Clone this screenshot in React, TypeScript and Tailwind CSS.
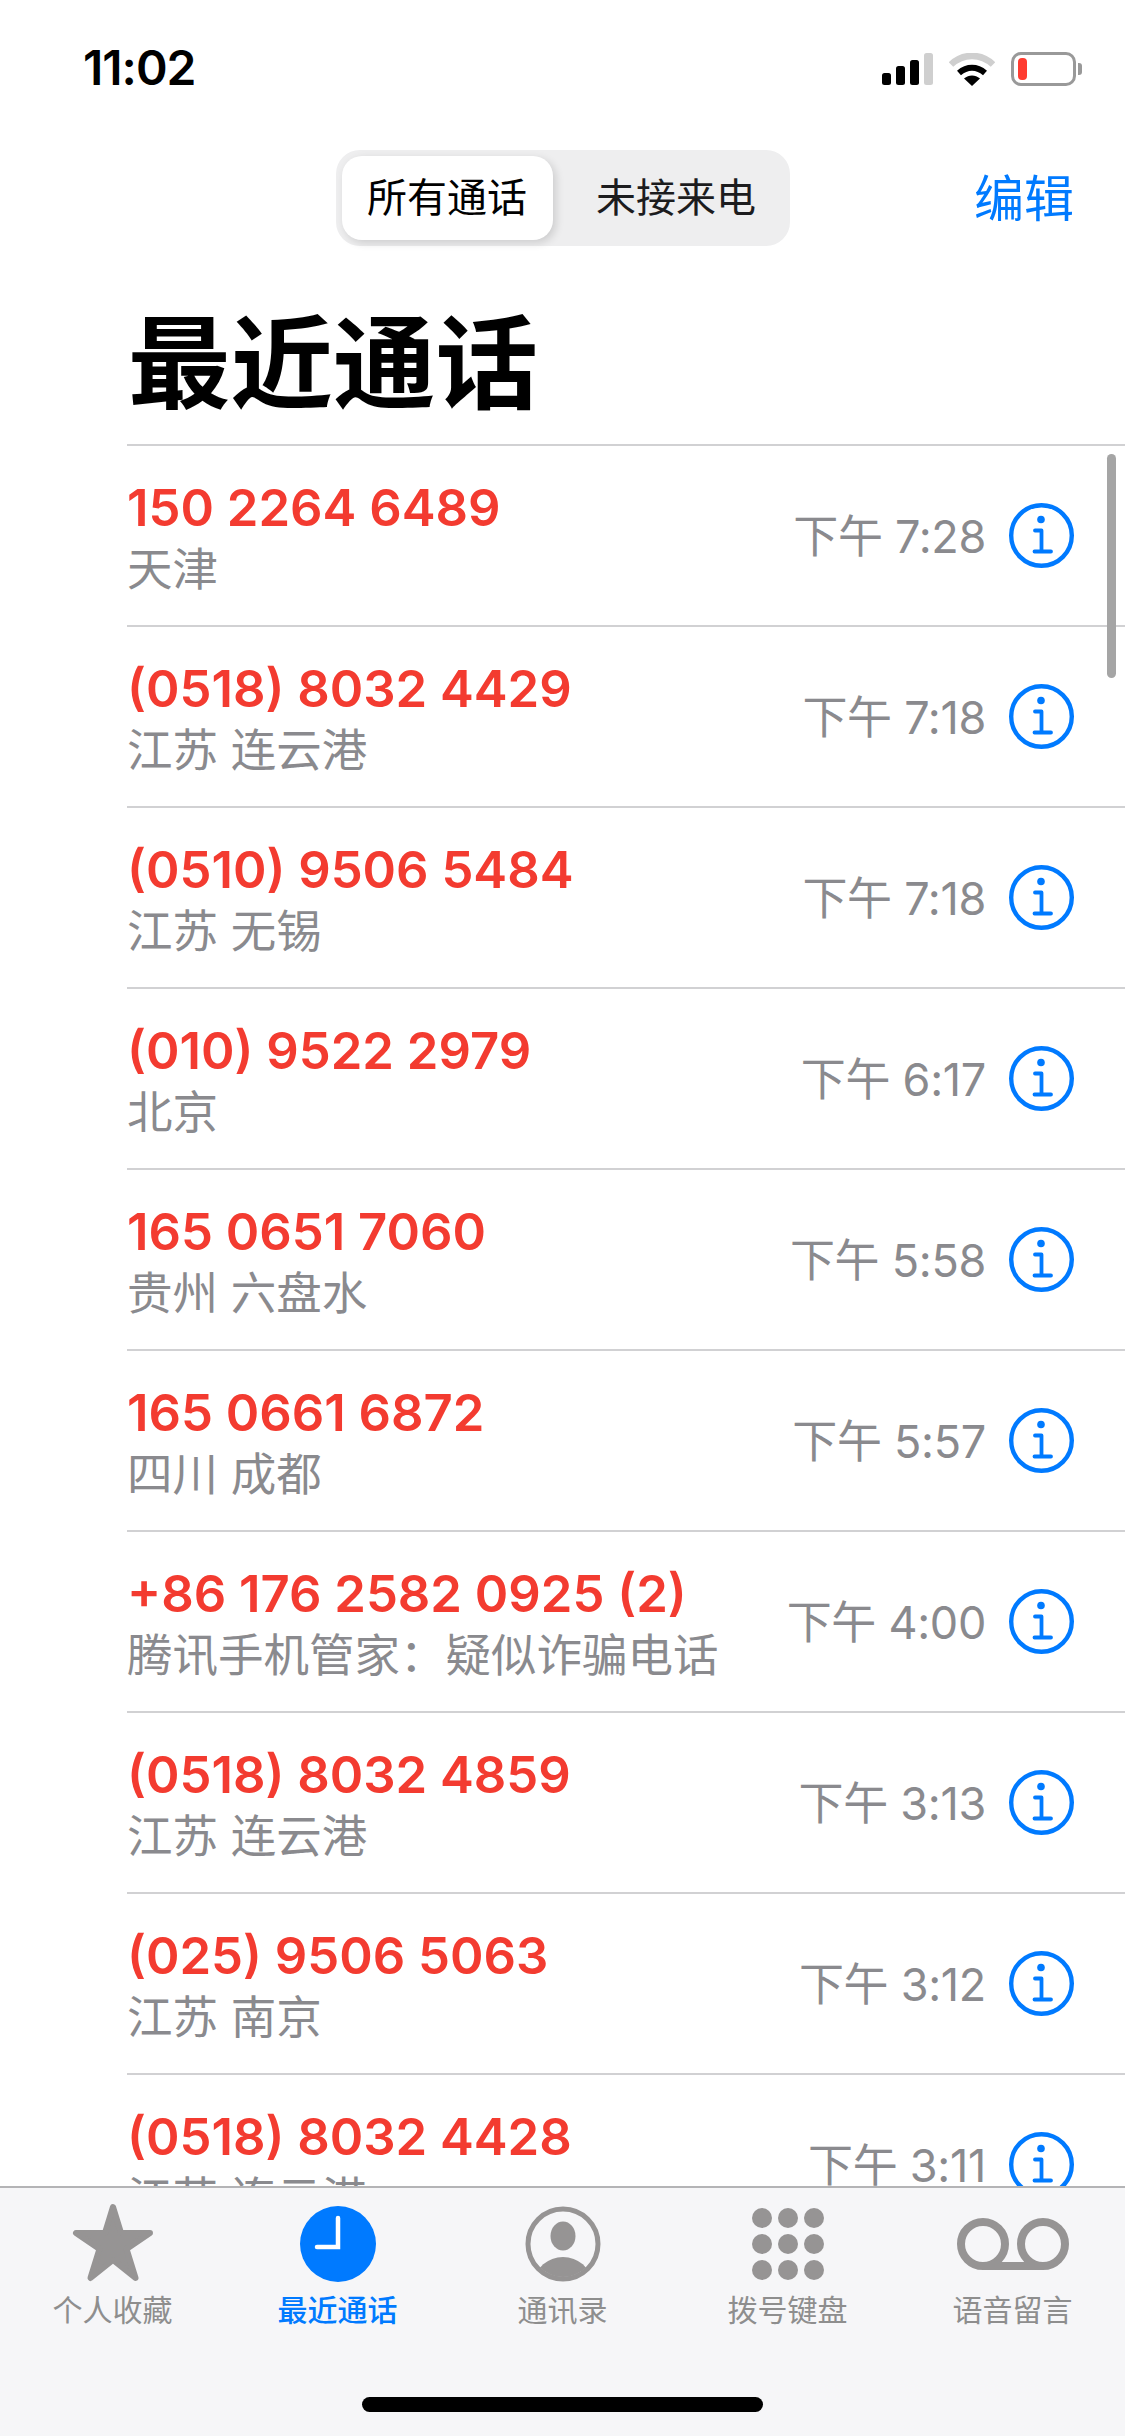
const calls = [
  { number: "150 2264 6489", place: "天津", time: "下午 7:28" },
  { number: "(0518) 8032 4429", place: "江苏 连云港", time: "下午 7:18" },
  { number: "(0510) 9506 5484", place: "江苏 无锡", time: "下午 7:18" },
  { number: "(010) 9522 2979", place: "北京", time: "下午 6:17" },
  { number: "165 0651 7060", place: "贵州 六盘水", time: "下午 5:58" },
  { number: "165 0661 6872", place: "四川 成都", time: "下午 5:57" },
  { number: "+86 176 2582 0925 (2)", place: "腾讯手机管家：疑似诈骗电话", time: "下午 4:00" },
  { number: "(0518) 8032 4859", place: "江苏 连云港", time: "下午 3:13" },
  { number: "(025) 9506 5063", place: "江苏 南京", time: "下午 3:12" },
  { number: "(0518) 8032 4428", place: "江苏 连云港", time: "下午 3:11" },
];

const fontStack = "font-['Inter','Noto_Sans_CJK_SC',sans-serif]";

const InfoIcon = () => (
  <svg width="65" height="65" viewBox="0 0 65 65" fill="none" className="shrink-0">
    <circle cx="32.5" cy="32.5" r="30.3" stroke="#007AFF" strokeWidth="4.4" />
    <circle cx="32" cy="16.5" r="3.8" fill="#007AFF" />
    <path d="M26 27.5H32.5V48.500M25.500 48.500H42" stroke="#007AFF" strokeWidth="3.8" strokeLinecap="round" strokeLinejoin="round" />
  </svg>
);

const StatusIcons = () => (
  <div className="flex items-center">
    <svg width="51" height="32" viewBox="0 0 51 32">
      <rect x="0" y="20" width="9" height="12" rx="2.5" fill="#000" />
      <rect x="14" y="13" width="9" height="19" rx="2.5" fill="#000" />
      <rect x="28" y="7" width="9" height="25" rx="2.5" fill="#000" />
      <rect x="42" y="0" width="9" height="32" rx="2.5" fill="#cfcfcf" />
    </svg>
    <svg width="46" height="33" viewBox="0 0 46 33" className="ml-[16px]">
      <path d="M2 11.500C14 0 32 0 44 11.500" stroke="#cfcfcf" strokeWidth="6.500" fill="none" />
      <path d="M10 20C18 13 28 13 36 20" stroke="#000" strokeWidth="6" fill="none" />
      <path d="M15 25.500C20 21.500 26 21.500 31 25.500L23 33Z" fill="#000" />
    </svg>
    <div className="ml-[16px] flex items-center">
      <div className="flex h-[34px] w-[65px] items-center rounded-[10px] border-[3px] border-[#999999] pl-[4px]">
        <div className="h-[22px] w-[9px] rounded-[4px] bg-[#ff3b30]" />
      </div>
      <div className="ml-[2px] h-[12px] w-[4px] rounded-r-[3px] bg-[#999999]" />
    </div>
  </div>
);

const StarIcon = () => (
  <svg width="84" height="80" viewBox="0 0 84 80" className="mt-[-3px]">
    <path d="M42 4L50 30H79L55.500 46L64.500 75L42 57L19.500 75L28.500 46L5 30H34Z" fill="#969494" stroke="#969494" strokeWidth="6" strokeLinejoin="round" />
  </svg>
);

const ClockIcon = () => (
  <svg width="76" height="76" viewBox="0 0 76 76">
    <circle cx="38" cy="38" r="38" fill="#007AFF" />
    <path d="M38 12V41H17" stroke="#fff" strokeWidth="4.500" fill="none" strokeLinecap="round" />
  </svg>
);

const ContactIcon = () => (
  <svg width="76" height="76" viewBox="0 0 76 76">
    <defs>
      <clipPath id="ring">
        <circle cx="38" cy="38" r="33" />
      </clipPath>
    </defs>
    <circle cx="38" cy="38" r="35" fill="none" stroke="#969494" strokeWidth="5" />
    <ellipse cx="38" cy="30" rx="12.500" ry="14.500" fill="#969494" />
    <ellipse cx="38" cy="76" rx="28" ry="25" fill="#969494" clipPath="url(#ring)" />
  </svg>
);

const KeypadIcon = () => (
  <svg width="74" height="74" viewBox="0 0 74 74">
    {[11, 37, 63].map((cy) =>
      [11, 37, 63].map((cx) => <circle key={`${cx}-${cy}`} cx={cx} cy={cy} r="10" fill="#969494" />)
    )}
  </svg>
);

const VoicemailIcon = () => (
  <svg width="114" height="54" viewBox="0 0 114 54">
    <circle cx="27" cy="27" r="22" fill="none" stroke="#969494" strokeWidth="8" />
    <circle cx="87" cy="27" r="22" fill="none" stroke="#969494" strokeWidth="8" />
    <path d="M27 49H87" stroke="#969494" strokeWidth="8" />
  </svg>
);

const tabs = [
  { label: "个人收藏", icon: <StarIcon />, active: false },
  { label: "最近通话", icon: <ClockIcon />, active: true },
  { label: "通讯录", icon: <ContactIcon />, active: false },
  { label: "拨号键盘", icon: <KeypadIcon />, active: false },
  { label: "语音留言", icon: <VoicemailIcon />, active: false },
];

export default function App() {
  return (
    <div className={`relative flex h-[2436px] w-[1125px] flex-col overflow-hidden bg-white ${fontStack}`}>
      {/* Status bar */}
      <div className="flex h-[136px] shrink-0 items-start justify-between pl-[83px] pr-[43px] pt-[44px]">
        <span className="text-[48px] leading-[48px] font-semibold tracking-[-1px] text-black">11:02</span>
        <div className="pt-[8px]">
          <StatusIcons />
        </div>
      </div>

      {/* Nav */}
      <div className="grid h-[150px] shrink-0 grid-cols-[1fr_454px_1fr] items-start pt-[14px]">
        <div />
        <div className="flex h-[96px] items-center rounded-[24px] bg-[#eeeeef] pl-[6px]">
          <div className="flex h-[84px] w-[211px] items-center justify-center rounded-[20px] bg-white text-[40px] text-black shadow-[3px_3px_8px_rgba(0,0,0,0.14)]">
            所有通话
          </div>
          <div className="flex h-[84px] flex-1 items-center justify-center pl-[10px] text-[40px] text-[#1c1c1e]">未接来电</div>
        </div>
        <div className="justify-self-end pr-[51px] pt-[20px] text-[50px] leading-[58px] text-[#007AFF]">编辑</div>
      </div>

      {/* Title */}
      <h1 className="h-[158px] shrink-0 pl-[128px] pt-[11px] text-[102.5px] leading-[134px] font-bold text-black">最近通话</h1>

      {/* List */}
      <div className="relative min-h-0 flex-1 overflow-hidden">
        {calls.map((call) => (
          <div key={call.number} className="ml-[127px] flex h-[181px] items-center border-t-2 border-[#d1d1d3] pr-[51px]">
            <div className="flex min-w-0 flex-1 flex-col pt-[6px]">
              <span className="text-[50.8px] leading-[62px] font-semibold text-[#f33b30]">{call.number}</span>
              <span className="text-[45.5px] leading-[62px] text-[#8a8a8e]">{call.place}</span>
            </div>
            <span className="mr-[23px] pt-[2px] text-[45px] leading-[60px] tracking-[-0.3px] text-[#8a8a8e]">{call.time}</span>
            <InfoIcon />
          </div>
        ))}
        {/* Scroll indicator */}
        <div className="absolute top-[10px] right-[9px] h-[224px] w-[9px] rounded-full bg-[#a5a5a5]" />
      </div>

      {/* Tab bar */}
      <div className="relative flex h-[250px] shrink-0 flex-col border-t-2 border-[#b4b4b6] bg-[#f6f6f8]">
        <div className="grid grid-cols-5">
          {tabs.map((tab) => (
            <div key={tab.label} className="flex flex-col items-center">
              <div className="flex h-[102px] items-center justify-center pt-[10px]">{tab.icon}</div>
              <span className={`text-[30px] leading-[40px] ${tab.active ? "font-medium text-[#007AFF]" : "text-[#8e8e8e]"}`}>
                {tab.label}
              </span>
            </div>
          ))}
        </div>
        <div className="absolute bottom-[24px] left-[362px] h-[15px] w-[401px] rounded-full bg-black" />
      </div>
    </div>
  );
}
